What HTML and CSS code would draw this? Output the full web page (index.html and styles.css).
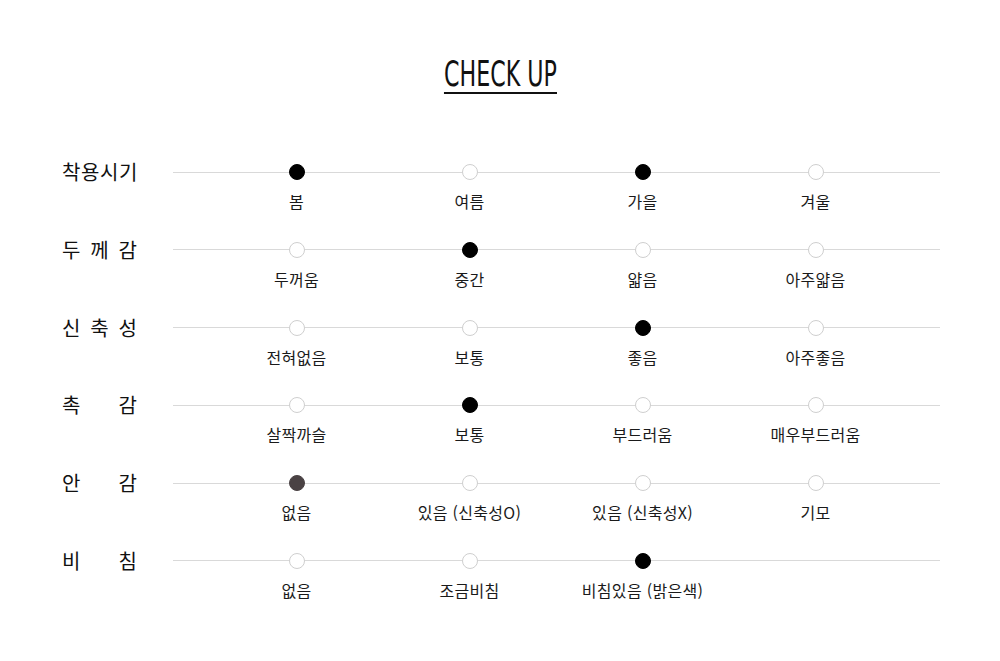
FILE: index.html
```html
<!DOCTYPE html>
<html lang="ko">
<head>
<meta charset="utf-8">
<link rel="stylesheet" href="styles.css">
</head>
<body>
<div class="page">
  <div class="title-wrap"><h1 class="title">CHECK UP</h1></div>
  <div class="table">
    <div class="row">
      <div class="label tight">착용시기</div>
      <div class="track">
        <div class="opt"><span class="dot on"></span><span class="txt">봄</span></div>
        <div class="opt"><span class="dot"></span><span class="txt">여름</span></div>
        <div class="opt"><span class="dot on"></span><span class="txt">가을</span></div>
        <div class="opt"><span class="dot"></span><span class="txt">겨울</span></div>
      </div>
    </div>
    <div class="row">
      <div class="label">두 께 감</div>
      <div class="track">
        <div class="opt"><span class="dot"></span><span class="txt">두꺼움</span></div>
        <div class="opt"><span class="dot on"></span><span class="txt">중간</span></div>
        <div class="opt"><span class="dot"></span><span class="txt">얇음</span></div>
        <div class="opt"><span class="dot"></span><span class="txt">아주얇음</span></div>
      </div>
    </div>
    <div class="row">
      <div class="label">신 축 성</div>
      <div class="track">
        <div class="opt"><span class="dot"></span><span class="txt">전혀없음</span></div>
        <div class="opt"><span class="dot"></span><span class="txt">보통</span></div>
        <div class="opt"><span class="dot on"></span><span class="txt">좋음</span></div>
        <div class="opt"><span class="dot"></span><span class="txt">아주좋음</span></div>
      </div>
    </div>
    <div class="row">
      <div class="label">촉 감</div>
      <div class="track">
        <div class="opt"><span class="dot"></span><span class="txt">살짝까슬</span></div>
        <div class="opt"><span class="dot on"></span><span class="txt">보통</span></div>
        <div class="opt"><span class="dot"></span><span class="txt">부드러움</span></div>
        <div class="opt"><span class="dot"></span><span class="txt">매우부드러움</span></div>
      </div>
    </div>
    <div class="row">
      <div class="label">안 감</div>
      <div class="track">
        <div class="opt"><span class="dot on grey"></span><span class="txt">없음</span></div>
        <div class="opt"><span class="dot"></span><span class="txt">있음 (신축성O)</span></div>
        <div class="opt"><span class="dot"></span><span class="txt">있음 (신축성X)</span></div>
        <div class="opt"><span class="dot"></span><span class="txt">기모</span></div>
      </div>
    </div>
    <div class="row">
      <div class="label">비 침</div>
      <div class="track">
        <div class="opt"><span class="dot"></span><span class="txt">없음</span></div>
        <div class="opt"><span class="dot"></span><span class="txt">조금비침</span></div>
        <div class="opt"><span class="dot on"></span><span class="txt">비침있음 (밝은색)</span></div>
      </div>
    </div>
  </div>
</div>
</body>
</html>
```
FILE: styles.css
```css
* { box-sizing: border-box; }
html, body { margin: 0; padding: 0; background: #fff; }
body {
  font-family: "Noto Sans CJK KR", "Noto Sans", sans-serif;
  color: #111;
  width: 1000px;
  height: 661px;
  overflow: hidden;
}
.page { padding-top: 56px; }
.title-wrap { display: flex; justify-content: center; }
.title {
  margin: 0;
  font-family: "Liberation Sans Narrow", "DejaVu Sans Condensed", "Liberation Sans", sans-serif;
  font-weight: 400;
  font-size: 36px;
  line-height: 36px;
  color: #111;
  border-bottom: 2px solid #111;
  padding-bottom: 0;
  transform: scaleX(0.685);
  letter-spacing: 0;
}
.table { margin-top: 70px; padding-left: 62px; }
.row {
  display: flex;
  height: 77.8px;
}
.label {
  width: 111px;
  flex: none;
  font-size: 20px;
  line-height: 16px;
  height: 16px;
  padding-right: 36px;
  text-align: justify;
  text-align-last: justify;
  color: #111;
  white-space: nowrap;
}
.label.tight { letter-spacing: 0.6px; }
.track {
  width: 767px;
  display: flex;
  padding-left: 37px;
  background: linear-gradient(#d9d9d9, #d9d9d9) no-repeat 0 7.5px / 100% 1px;
  align-items: flex-start;
}
.opt {
  width: 173px;
  display: flex;
  flex-direction: column;
  align-items: center;
}
.dot {
  width: 16px;
  height: 16px;
  border-radius: 50%;
  background: #fff;
  border: 1px solid #cfcfcf;
}
.dot.on { background: #000; border-color: #000; }
.dot.on.grey { background: #4a4244; border-color: #4a4244; }
.txt {
  margin-top: 11px;
  font-size: 16px;
  line-height: 20px;
  color: #1a1a1a;
  white-space: nowrap;
  letter-spacing: 0.3px;
}
```
